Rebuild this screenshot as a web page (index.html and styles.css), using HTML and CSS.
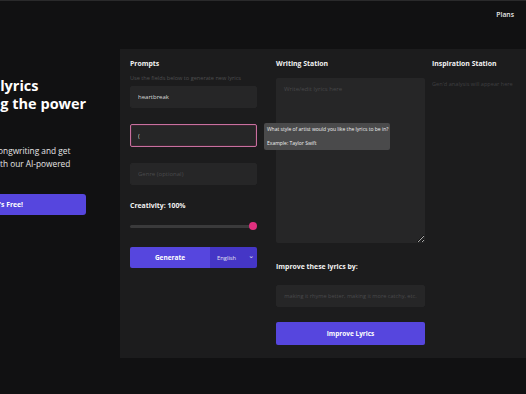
FILE: index.html
```html
<!DOCTYPE html>
<html lang="en">
<head>
  <meta charset="UTF-8">
  <meta name="viewport" content="width=device-width, initial-scale=1.0">
  <title>Lyric Studio</title>
  <link rel="stylesheet" href="styles.css">
</head>
<body>

  <header class="topbar">
    <a class="nav-link" href="#">Plans</a>
  </header>

  <main class="layout">
    <section class="hero">
      <h1>Generate lyrics<br>harnessing the power</h1>
      <p>Level up all your songwriting and get<br>fresh lyric ideas with our AI-powered</p>
      <button class="btn hero-btn">Try It, It's Free!</button>
    </section>

    <section class="panel">
      <div class="col col-prompts">
        <h3>Prompts</h3>
        <p class="hint">Use the fields below to generate new lyrics</p>
        <input class="field" type="text" value="heartbreak">
        <div class="field-wrap">
          <input class="field focused" type="text" value="(">
          <div class="tooltip">
            <div>What style of artist would you like the lyrics to be in?</div>
            <div>Example: Taylor Swift</div>
          </div>
        </div>
        <input class="field" type="text" placeholder="Genre (optional)">
        <h3 class="label">Creativity: 100%</h3>
        <div class="slider"><span class="thumb"></span></div>
        <div class="gen-row">
          <button class="btn gen-btn">Generate</button>
          <div class="lang">English <span class="chev">&#8964;</span></div>
        </div>
      </div>

      <div class="col col-writing">
        <h3>Writing Station</h3>
        <textarea class="editor" placeholder="Write/edit lyrics here"></textarea>
        <h3 class="label">Improve these lyrics by:</h3>
        <input class="field center" type="text" placeholder="making it rhyme better, making it more catchy, etc.">
        <button class="btn improve-btn">Improve Lyrics</button>
      </div>

      <div class="col col-inspire">
        <h3>Inspiration Station</h3>
        <p class="hint">Gen'd analysis will appear here</p>
      </div>
    </section>
  </main>

</body>
</html>
```

FILE: styles.css
```css
body { margin: 0; background: #111112; font-family: "Open Sans", "DejaVu Sans", sans-serif; color: #eee; overflow: hidden; height: 393px; border-top: 1px solid #2a2a2b; }
.topbar { height: 48px; display: flex; justify-content: flex-end; align-items: flex-start; padding-right: 12px; }
.nav-link { color: #e8e8e8; text-decoration: none; font-size: 6.8px; font-weight: 600; margin-top: 9px; }

.layout { display: flex; }
.hero { width: 173px; margin-left: -71px; margin-right: 18px; padding-top: 28px; flex-shrink: 0; }
.hero h1 { font-size: 14.5px; line-height: 18px; margin: 0; font-weight: 700; color: #fff; white-space: nowrap; }
.hero p { font-size: 8.3px; line-height: 13px; margin: 31px 0 0; color: #e6e6e6; white-space: nowrap; }
.btn { border: none; background: #5646de; color: #fff; font-family: "Open Sans", sans-serif; font-weight: 700; font-size: 6.5px; cursor: pointer; }
.hero-btn { width: 157px; height: 21px; border-radius: 3px; margin-top: 24px; font-size: 6.8px; text-align: right; padding: 0 63px 0 0; }

.panel { background: #1c1c1d; width: 520px; height: 309px; flex-shrink: 0; display: grid; grid-template-columns: 146px 156px 1fr; padding: 10px 0 0 10px; box-sizing: border-box; }
.col h3 { font-size: 6.9px; font-weight: 700; margin: 0; line-height: 10px; color: #f2f2f2; }
.hint { font-size: 5.6px; color: #4e4e50; margin: 4px 0 0; line-height: 10px; }

.field { display: block; width: 127px; height: 22px; box-sizing: border-box; background: #262627; border: 1px solid #262627; border-radius: 2px; color: #d8d8d8; font-family: "Open Sans", sans-serif; font-size: 6px; padding: 0 7px; outline: none; }
.field::placeholder { color: #4a4a4c; }
.col-prompts .field { margin-top: 15px; }
.col-prompts .hint + .field { margin-top: 3px; }
.col-prompts .field:last-of-type { margin-top: 16px; }
.field-wrap { position: relative; }
.field.focused { border: 1px solid #c8709f; height: 23px; box-shadow: inset 0 0 0 1px #3a2530; }
.tooltip { position: absolute; left: 134px; top: -1px; width: 126px; background: #4a4a4b; border-radius: 2px; padding: 3px 3px; box-sizing: border-box; font-size: 5px; line-height: 7px; color: #f0f0f0; white-space: nowrap; }
.tooltip div + div { margin-top: 7px; }

.label { margin-top: 16px !important; }
.slider { position: relative; width: 123px; height: 3px; background: #3a3a3b; border-radius: 2px; margin-top: 14px; }
.thumb { position: absolute; right: -4px; top: -3px; width: 8px; height: 8px; border-radius: 50%; background: #e0307f; }

.gen-row { display: flex; margin-top: 19px; width: 127px; height: 21px; border-radius: 2px; overflow: hidden; }
.gen-btn { width: 80px; height: 21px; }
.lang { flex: 1; background: #4536c6; font-size: 5.8px; color: #e0e0f0; display: flex; align-items: center; justify-content: space-between; padding: 0 3px 0 7px; }
.chev { font-size: 7px; line-height: 7px; margin-top: -4px; }

.editor { display: block; width: 149px; height: 165px; box-sizing: border-box; margin-top: 9px; background: #262627; border: none; border-radius: 2px; resize: vertical; padding: 7px 8px; color: #ddd; font-family: "Open Sans", sans-serif; font-size: 6px; outline: none; }
.editor::placeholder { color: #48484a; }
.col-writing .label { margin-top: 19px !important; }
.col-writing .field { width: 149px; margin-top: 13px; font-size: 5.6px; padding: 0 3px; }
.field.center { text-align: center; }
.improve-btn { display: block; width: 149px; height: 23px; border-radius: 2px; margin-top: 15px; font-size: 6.5px; }

.col-inspire .hint { margin-top: 10px; color: #3f3f41; }
```
